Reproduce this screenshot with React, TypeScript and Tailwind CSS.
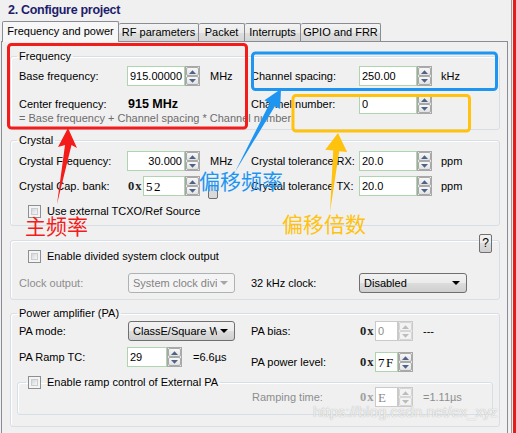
import React from "react";

const SANS = "font-['Liberation_Sans',Arial,sans-serif]";
const SERIF = "font-['Liberation_Serif','Times_New_Roman',serif]";
const CJK = "font-['Noto_Sans_CJK_SC','Noto_Sans',sans-serif]";
const GROUP = "border border-[#d5dfe5] rounded-[3px] shadow-[inset_1px_1px_0_#ffffff]";
const BTN_BG = "bg-[linear-gradient(#f2f2f2,#ebebeb_50%,#dddddd_50%,#cfcfcf)]";

function Arrow({ up, disabled }: { up: boolean; disabled?: boolean }) {
  return (
    <svg width="7" height="4" viewBox="0 0 7 4">
      <path d={up ? "M0 4L3.5 0.3L7 4Z" : "M0 0L3.5 3.7L7 0Z"} fill={disabled ? "#bcbcbc" : "#4e6287"} />
    </svg>
  );
}

function SpinButtons({ disabled }: { disabled?: boolean }) {
  const btn = disabled
    ? "flex-1 flex items-center justify-center rounded-[2px] border border-[#d6d6d6] bg-[#f3f3f3]"
    : "flex-1 flex items-center justify-center rounded-[2px] border border-[#a9a9a9] bg-[linear-gradient(#f8f8f8,#e2e2e2)]";
  return (
    <div
      className={`w-[15px] h-full shrink-0 flex flex-col border ${
        disabled ? "border-[#cacaca]" : "border-[#a8a8a8]"
      } bg-[#f0f0f0]`}
    >
      <div className={btn}>
        <Arrow up disabled={disabled} />
      </div>
      <div className={btn}>
        <Arrow up={false} disabled={disabled} />
      </div>
    </div>
  );
}

function Spin({
  value,
  box,
  right,
  mono,
  disabled,
}: {
  value: string;
  box: string;
  right?: boolean;
  mono?: boolean;
  disabled?: boolean;
}) {
  return (
    <div className="flex h-[20px] shrink-0">
      <div
        className={`${box} h-full border bg-white flex items-center px-[2px] ${
          disabled ? "border-[#cacaca] text-[#8c8c8c]" : "border-[#aed5ae] text-black"
        } ${right ? "justify-end" : ""} ${mono ? `${SERIF} text-[13px] tracking-[1.5px]` : ""}`}
      >
        {value}
      </div>
      <SpinButtons disabled={disabled} />
    </div>
  );
}

function Hex({ disabled }: { disabled?: boolean }) {
  return (
    <span
      className={`w-[15px] shrink-0 ${SERIF} text-[12.5px] font-bold tracking-[1px] ${
        disabled ? "text-[#a0a0a0]" : "text-[#222]"
      }`}
    >
      0x
    </span>
  );
}

function Check() {
  return (
    <span className="inline-flex w-[13px] h-[13px] shrink-0 border border-[#8e8f8f] bg-[#f4f4f4] p-[2px]">
      <span className="w-full h-full border border-[#c9ccd1] bg-[linear-gradient(135deg,#d3d6da,#f7f7f7)]" />
    </span>
  );
}

function Combo({ text, w, disabled }: { text: string; w: string; disabled?: boolean }) {
  return (
    <div
      className={`${w} h-[20px] shrink-0 rounded-[3px] border flex items-center pl-[4px] pr-[6px] ${
        disabled ? "border-[#adb2b5] bg-[#f4f4f4] text-[#838383]" : `border-[#707070] ${BTN_BG} text-black`
      }`}
    >
      <span className="flex-1 overflow-hidden whitespace-nowrap">{text}</span>
      <svg width="8" height="4" viewBox="0 0 8 4" className="ml-[3px] shrink-0">
        <path d="M0 0L4 4L8 0Z" fill={disabled ? "#a6a6a6" : "#000"} />
      </svg>
    </div>
  );
}

function Label({ children, w, gray }: { children: React.ReactNode; w: string; gray?: boolean }) {
  return <span className={`${w} shrink-0 whitespace-nowrap ${gray ? "text-[#8d8d8d]" : ""}`}>{children}</span>;
}

function Tab({ children, w, active }: { children: React.ReactNode; w: string; active?: boolean }) {
  if (active) {
    return (
      <div
        className={`${w} h-[21px] shrink-0 border border-b-0 border-[#898c95] rounded-t-[2px] bg-[#f7f7f7] flex items-center justify-center pb-[1px]`}
      >
        {children}
      </div>
    );
  }
  return (
    <div
      className={`${w} h-[18px] shrink-0 border border-l-0 border-b-0 border-[#898c95] rounded-t-[2px] bg-[linear-gradient(#f3f3f3,#ebebeb_50%,#dedede_50%,#d6d6d6)] flex items-center justify-center`}
    >
      {children}
    </div>
  );
}

export default function App() {
  return (
    <div
      className={`relative w-[516px] h-[433px] overflow-hidden bg-[#f0f0f0] flex text-[11px] leading-[13px] text-black ${SANS}`}
    >
      <div className="w-[511px] h-full flex flex-col">
        <div className="h-[21px] pl-[8px] pt-[3px] text-[12.5px] leading-[14px] font-bold text-[#1d1d6b] tracking-[-0.3px]">
          2. Configure project
        </div>
        <div className="relative z-10 h-[21px] flex items-end pl-[2px]">
          <Tab w="w-[117px]" active>
            Frequency and power
          </Tab>
          <div className="flex items-end h-full pb-[1px]">
            <Tab w="w-[80px]">RF parameters</Tab>
            <Tab w="w-[46px]">Packet</Tab>
            <Tab w="w-[56px]">Interrupts</Tab>
            <Tab w="w-[80px]">GPIO and FRR</Tab>
          </div>
        </div>
        <div className="relative -mt-px ml-[1px] w-[507px] flex-1 border border-b-0 border-[#898c95] bg-[#f0f0f0] pl-[8px] pt-[8px]">
          {/* Frequency */}
          <fieldset className={`${GROUP} w-[490px] pl-[8px] pb-[5px]`}>
            <legend className="-ml-[2px] px-[2px] leading-[13px]">Frequency</legend>
            <div className="mt-[3px] h-[20px] flex items-center">
              <div className="w-[232px] flex items-center">
                <Label w="w-[108px]">Base frequency:</Label>
                <Spin value="915.00000" box="w-[58px]" />
                <span className="ml-[10px]">MHz</span>
              </div>
              <div className="flex items-center">
                <Label w="w-[108px]">Channel spacing:</Label>
                <Spin value="250.00" box="w-[58px]" />
                <span className="ml-[9px]">kHz</span>
              </div>
            </div>
            <div className="mt-[8px] h-[20px] flex items-center">
              <div className="w-[232px] flex items-center">
                <Label w="w-[109px]">Center frequency:</Label>
                <span className="font-bold text-[12.5px]">915 MHz</span>
              </div>
              <div className="flex items-center">
                <Label w="w-[108px]">Channel number:</Label>
                <Spin value="0" box="w-[58px]" />
              </div>
            </div>
            <div className="-mt-[2px] h-[12px] leading-[12px] text-[#6d6d6d]">
              = Base frequency + Channel spacing * Channel number
            </div>
          </fieldset>

          {/* Crystal */}
          <fieldset className={`${GROUP} mt-[4px] w-[490px] pl-[8px] pb-[4px]`}>
            <legend className="-ml-[2px] px-[2px] leading-[13px]">Crystal</legend>
            <div className="mt-[4px] h-[20px] flex items-center">
              <div className="w-[232px] flex items-center">
                <Label w="w-[108px]">Crystal Frequency:</Label>
                <Spin value="30.000" box="w-[58px]" right />
                <span className="ml-[10px]">MHz</span>
              </div>
              <div className="flex items-center">
                <Label w="w-[108px]">Crystal tolerance RX:</Label>
                <Spin value="20.0" box="w-[58px]" />
                <span className="ml-[9px]">ppm</span>
              </div>
            </div>
            <div className="mt-[5px] h-[20px] flex items-center">
              <div className="w-[232px] flex items-center">
                <Label w="w-[109px]">Crystal Cap. bank:</Label>
                <Hex />
                <Spin value="52" box="w-[42px]" mono />
                <span className="relative top-[6px] ml-[8px] w-[10px] h-[14px] rounded-[2px] border border-[#707070] bg-[#dadada]" />
              </div>
              <div className="flex items-center">
                <Label w="w-[108px]">Crystal tolerance TX:</Label>
                <Spin value="20.0" box="w-[58px]" />
                <span className="ml-[9px]">ppm</span>
              </div>
            </div>
            <div className="mt-[5px] h-[20px] flex items-center pl-[9px]">
              <Check />
              <span className="ml-[6px]">Use external TCXO/Ref Source</span>
            </div>
          </fieldset>

          {/* Clock output */}
          <fieldset className={`${GROUP} relative mt-[14px] w-[490px] pl-[8px] pt-[5px] pb-[6px]`}>
            <div
              className={`absolute left-[468px] -top-[7px] w-[13px] h-[19px] rounded-[2px] border border-[#707070] ${BTN_BG} flex items-center justify-center text-[12px]`}
            >
              ?
            </div>
            <div className="h-[20px] flex items-center pl-[9px]">
              <Check />
              <span className="ml-[6px]">Enable divided system clock output</span>
            </div>
            <div className="mt-[7px] h-[20px] flex items-center">
              <div className="w-[232px] flex items-center">
                <Label w="w-[109px]" gray>
                  Clock output:
                </Label>
                <Combo text="System clock divider" w="w-[107px]" disabled />
              </div>
              <div className="flex items-center">
                <Label w="w-[108px]">32 kHz clock:</Label>
                <Combo text="Disabled" w="w-[108px]" />
              </div>
            </div>
          </fieldset>

          {/* Power amplifier */}
          <fieldset className={`${GROUP} mt-[7px] w-[490px] pl-[8px] pb-[11px]`}>
            <legend className="-ml-[2px] px-[2px] leading-[13px]">Power amplifier (PA)</legend>
            <div className="mt-[1px] flex">
              <div className="w-[232px] flex flex-col">
                <div className="h-[20px] flex items-center">
                  <Label w="w-[109px]">PA mode:</Label>
                  <Combo text="ClassE/Square Wave" w="w-[107px]" />
                </div>
                <div className="mt-[6px] h-[20px] flex items-center">
                  <Label w="w-[108px]">PA Ramp TC:</Label>
                  <Spin value="29" box="w-[40px]" />
                  <span className="ml-[11px]">=6.6µs</span>
                </div>
              </div>
              <div className="flex flex-col">
                <div className="h-[20px] flex items-center">
                  <Label w="w-[109px]">PA bias:</Label>
                  <Hex />
                  <Spin value="0" box="w-[23px]" disabled />
                  <span className="ml-[10px]">---</span>
                </div>
                <div className="mt-[11px] h-[20px] flex items-center">
                  <Label w="w-[109px]">PA power level:</Label>
                  <Hex />
                  <Spin value="7F" box="w-[23px]" mono />
                </div>
              </div>
            </div>
            <fieldset className={`${GROUP} -ml-[2px] mt-[4px] w-[476px] pl-[1px] pb-[9px]`}>
              <legend className="ml-[7px] px-[2px] leading-[13px] flex items-center">
                <Check />
                <span className="ml-[6px]">Enable ramp control of External PA</span>
              </legend>
              <div className="h-[16px] flex items-center">
                <span className="w-[233px] shrink-0" />
                <Label w="w-[108px]" gray>
                  Ramping time:
                </Label>
                <Hex disabled />
                <Spin value="E" box="w-[23px]" mono disabled />
                <span className="ml-[10px] text-[#8d8d8d]">=1.11µs</span>
              </div>
            </fieldset>
          </fieldset>
        </div>
      </div>
      <div className="w-px h-full bg-[#9a9a9a]" />
      <div className="w-px h-full bg-[#f0f0f0]" />
      <div className="w-[3px] h-full bg-[#e51c1c]" />

      {/* watermark */}
      <span className="absolute left-[313px] top-[403px] text-[15px] leading-[18px] text-white/80 [text-shadow:0_0_1px_#9a9a9a] whitespace-nowrap">
        https://blog.csdn.net/ex_xyz
      </span>

      {/* annotations */}
      <svg className="absolute left-0 top-0 pointer-events-none" width="516" height="433" viewBox="0 0 516 433">
        <rect x="8.5" y="44.5" width="238" height="83.5" rx="3" fill="none" stroke="#f41b1b" strokeWidth="3" />
        <rect x="252.5" y="53" width="244" height="36.5" rx="3" fill="none" stroke="#1f95f2" strokeWidth="3" />
        <rect x="293" y="95.5" width="176.5" height="35.5" rx="3" fill="none" stroke="#ffc20e" strokeWidth="3" />
        <polygon points="68,128 77,148 71.5,145 57,204 65,145 58,147" fill="#f41b1b" />
        <polygon points="281,89 280.2,109.1 274.9,106.2 235,172 269.7,103.2 264.4,100.3" fill="#1f95f2" />
        <polygon points="338,133 347.1,152 339.2,151.2 330,212 333.2,150.6 325.3,149.8" fill="#ffc20e" />
      </svg>
      <span className={`absolute left-[25px] top-[215px] text-[21px] leading-[21px] text-[#f41b1b] ${CJK}`}>主频率</span>
      <span className={`absolute left-[199px] top-[170px] text-[21px] leading-[21px] text-[#1f95f2] ${CJK}`}>偏移频率</span>
      <span className={`absolute left-[282px] top-[213px] text-[21px] leading-[21px] text-[#ffc20e] ${CJK}`}>偏移倍数</span>
    </div>
  );
}
